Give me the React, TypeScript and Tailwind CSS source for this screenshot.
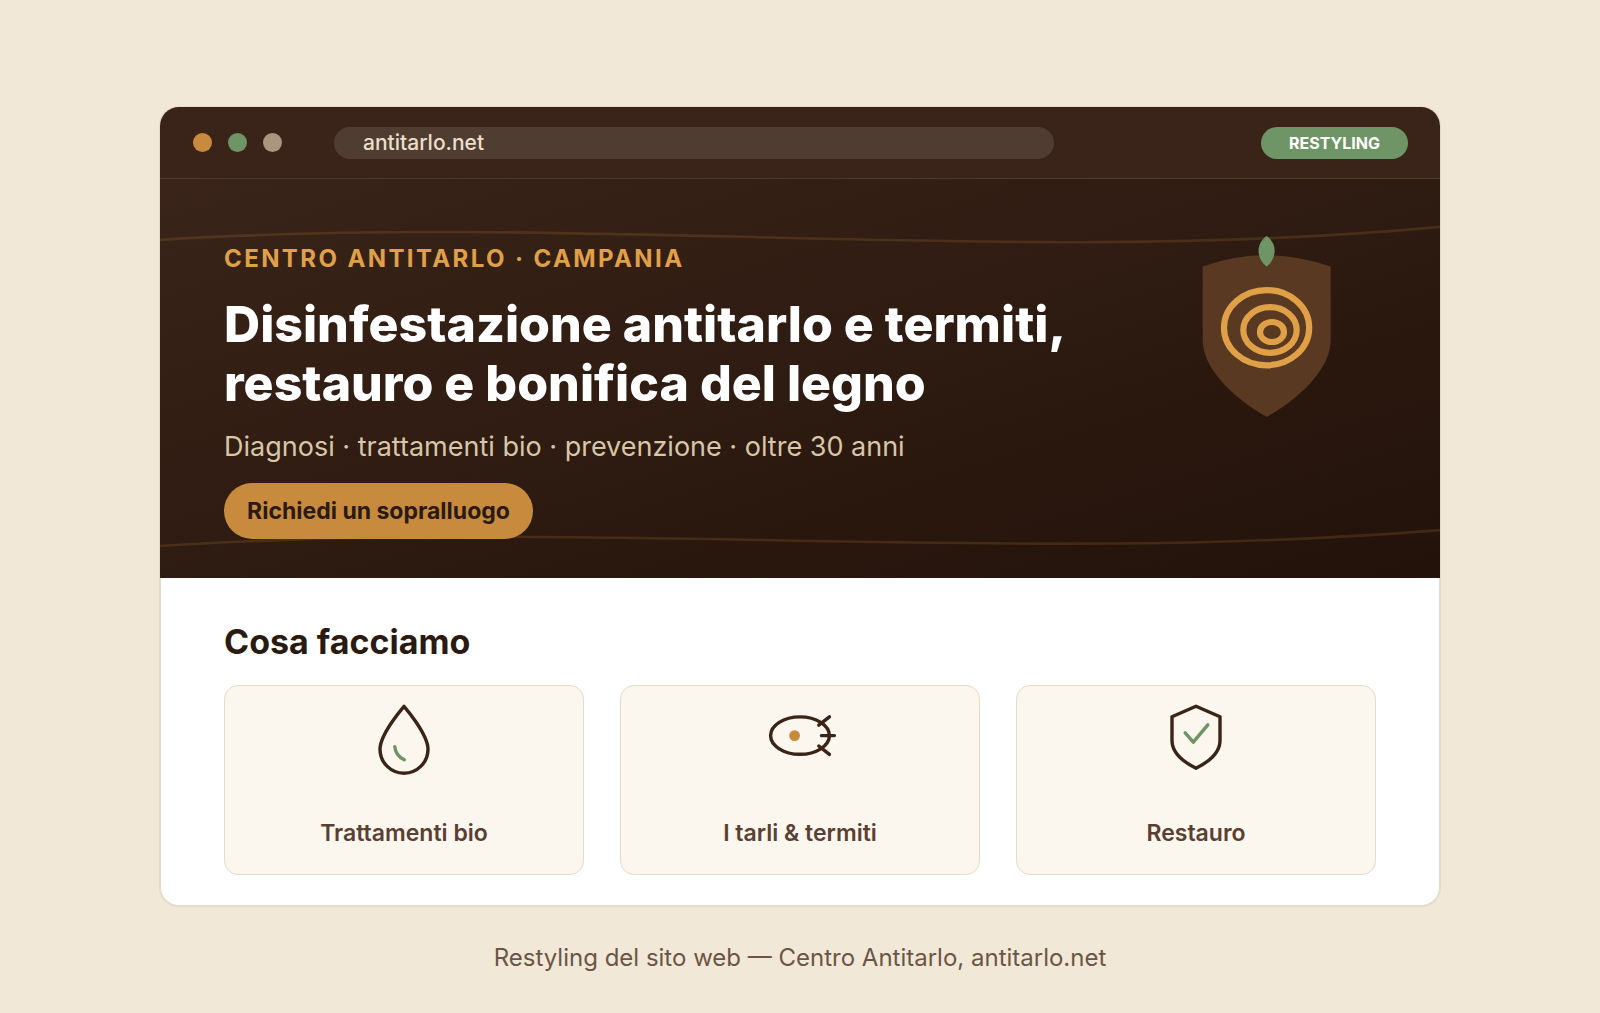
import React from 'react';

interface Service {
  id: string;
  label: string;
  icon: React.ReactNode;
}

const DropIcon = () => (
  <svg viewBox="-1 0 90 100" className="h-[100px] w-[90px]" fill="none" strokeWidth="3.4" strokeLinecap="round" strokeLinejoin="round" aria-hidden="true">
    <path d="M44 16.3C44 16.3 20 44 20 59.2A24 24 0 0 0 68 59.2C68 44 44 16.3 44 16.3Z" stroke="#3a2317" />
    <path d="M34.8 56.6Q35.4 65.4 44.3 69.8" stroke="#6f9465" />
  </svg>
);

const BugIcon = () => (
  <svg viewBox="0 0 90 100" className="h-[100px] w-[90px]" fill="none" strokeWidth="3.4" strokeLinecap="round" aria-hidden="true">
    <ellipse cx="45" cy="45.6" rx="29.4" ry="18.7" stroke="#3a2317" />
    <circle cx="39.6" cy="45.6" r="5.4" fill="#c88a3c" />
    <path d="M63.8 35.2L74.4 26.8M66.4 45.6H79.4M63.8 56L74.4 64.4" stroke="#3a2317" />
  </svg>
);

const ShieldIcon = () => (
  <svg viewBox="1 0 90 100" className="h-[100px] w-[90px]" fill="none" strokeWidth="3.4" strokeLinecap="round" strokeLinejoin="round" aria-hidden="true">
    <path d="M46 16.2L70 26.8V50.5C70 62.5 59.5 71.5 46 78.2C32.5 71.5 22 62.5 22 50.5V26.8Z" stroke="#3a2317" />
    <path d="M35.2 42.8L43.3 52.2L57.8 34.8" stroke="#6f9465" />
  </svg>
);

const services: Service[] = [
  { id: 'bio', label: 'Trattamenti bio', icon: <DropIcon /> },
  { id: 'tarli', label: 'I tarli & termiti', icon: <BugIcon /> },
  { id: 'restauro', label: 'Restauro', icon: <ShieldIcon /> },
];

const BrowserBar = () => (
  <div className="flex h-[71px] items-center rounded-t-[19px] bg-[#3a2419] pl-[33px] pr-8">
    <div className="flex shrink-0 gap-4">
      <span className="size-[19px] rounded-full bg-[#c88a3c]" />
      <span className="size-[19px] rounded-full bg-[#6f9465]" />
      <span className="size-[19px] rounded-full bg-[#a8967e]" />
    </div>
    <input
      type="text"
      aria-label="Indirizzo"
      readOnly
      value="antitarlo.net"
      className="ml-[52px] h-8 w-[720px] min-w-0 rounded-full bg-[#503d32] px-[29px] text-[21px] leading-8 font-medium text-[#ecdfca] outline-none"
    />
    <span className="ml-auto w-[147px] shrink-0 rounded-full bg-[#6f9465] text-center text-[16px] leading-8 font-bold text-white">RESTYLING</span>
  </div>
);

const Emblem = () => (
  <svg viewBox="22 10 130 184" className="mr-[44px] h-[184px] w-[130px] shrink-0" aria-hidden="true">
    <path d="M22.7 41.6Q86.7 18.6 150.7 41.6V115C150.7 141 125 170 86.7 192C48.4 170 22.7 141 22.7 115Z" fill="#5a3923" />
    <g fill="none" stroke="#e0a048" strokeWidth="6.2">
      <ellipse cx="86.6" cy="102.7" rx="42.6" ry="37.6" />
      <ellipse cx="90" cy="105" rx="26.7" ry="22.9" />
      <ellipse cx="92" cy="107" rx="12" ry="10" />
    </g>
    <path d="M86.6 11C97.4 18.6 97.4 32.6 86.6 41.7C75.8 32.6 75.8 18.6 86.6 11Z" fill="#6f9465" />
  </svg>
);

const Hero = () => (
  <section className="relative border-t border-[#4e3b2e] bg-linear-to-br from-[#3a2419] via-[#2e1b11] to-[#22120a]">
    {/* wood grain */}
    <svg viewBox="0 0 1280 400" preserveAspectRatio="none" className="absolute inset-0 h-full w-full" fill="none" stroke="#c88a3c" strokeOpacity="0.18" strokeWidth="2.6" aria-hidden="true">
      <path d="M0 61C427 34 853 88 1280 48" />
      <path d="M0 368C427 340 853 387 1280 352" />
    </svg>
    <div className="relative flex items-start justify-between px-16 pt-14 pb-[39px]">
      <div className="pt-2">
        <p className="text-2xl leading-8 font-bold tracking-widest text-[#e0a048]">CENTRO ANTITARLO · CAMPANIA</p>
        <h1 className="mt-5 text-[50px] leading-[59px] font-extrabold text-white">
          Disinfestazione antitarlo e termiti,
          <br />
          restauro e bonifica del legno
        </h1>
        <p className="mt-[18px] text-[27px] leading-8 text-[#d8c6a6]">Diagnosi · trattamenti bio · prevenzione · oltre 30 anni</p>
        <button type="button" className="mt-5 h-14 w-[309px] rounded-full bg-[#c88a3c] text-[23px] font-bold text-[#2a1a12]">
          Richiedi un sopralluogo
        </button>
      </div>
      <Emblem />
    </div>
  </section>
);

const Services = () => (
  <section className="rounded-b-[19px] border border-t-0 border-[#e6dac8] bg-white px-[63px] pt-11 pb-[30px]">
    <h2 className="text-[34px] leading-10 font-bold text-[#2a1a12]">Cosa facciamo</h2>
    <div className="mt-[23px] grid grid-cols-3 gap-9">
      {services.map(s => (
        <article key={s.id} className="flex flex-col items-center rounded-[14px] border border-[#e6dac8] bg-[#fbf6ee] pt-1 pb-[27px]">
          {s.icon}
          <h3 className="mt-[29px] text-[23px] leading-7 font-semibold text-[#5a4032]">{s.label}</h3>
        </article>
      ))}
    </div>
  </section>
);

export default function App() {
  return (
    <div className="min-h-screen bg-[#f1e8d8] px-[10%] pt-[107px] pb-8 font-['Inter',sans-serif]">
      <main className="rounded-[19px] shadow-[0_0_0_1px_#e6dac8]">
        <BrowserBar />
        <Hero />
        <Services />
      </main>
      <p className="mt-9 text-center text-[24px] leading-8 text-[#6b5645]">Restyling del sito web — Centro Antitarlo, antitarlo.net</p>
    </div>
  );
}
